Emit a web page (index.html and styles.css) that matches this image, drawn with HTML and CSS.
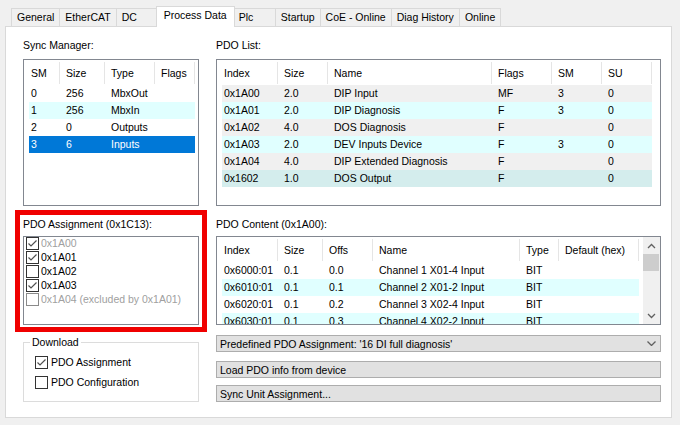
FILE: index.html
```html
<!DOCTYPE html>
<html>
<head>
<meta charset="utf-8">
<title>Process Data</title>
<link rel="stylesheet" href="styles.css">
</head>
<body>
<div class="tabs">
  <div class="tab">General</div>
  <div class="tab">EtherCAT</div>
  <div class="tab">DC</div>
  <div class="tab active">Process Data</div>
  <div class="tab">Plc</div>
  <div class="tab">Startup</div>
  <div class="tab">CoE - Online</div>
  <div class="tab">Diag History</div>
  <div class="tab last">Online</div>
</div>
<div class="panel">
  <div class="col">
    <div class="label">Sync Manager:</div>
    <div class="lv lv-top lv-sm">
      <div class="lv-head"><span class="c">SM</span><span class="c">Size</span><span class="c">Type</span><span class="c">Flags</span></div>
      <div class="lv-row"><span class="c">0</span><span class="c">256</span><span class="c">MbxOut</span><span class="c"></span></div>
      <div class="lv-row r-cyan"><span class="c">1</span><span class="c">256</span><span class="c">MbxIn</span><span class="c"></span></div>
      <div class="lv-row"><span class="c">2</span><span class="c">0</span><span class="c">Outputs</span><span class="c"></span></div>
      <div class="lv-row r-sel"><span class="c">3</span><span class="c">6</span><span class="c">Inputs</span><span class="c"></span></div>
    </div>
    <div class="group assign">
      <div class="label small-gap">PDO Assignment (0x1C13):</div>
      <div class="lv lv-assign">
        <div class="ai dim"><span class="cb"><svg viewBox="0 0 11 11"><polyline points="1.5,5.5 4,8 9.5,2.5"/></svg></span><span>0x1A00</span></div>
        <div class="ai"><span class="cb"><svg viewBox="0 0 11 11"><polyline points="1.5,5.5 4,8 9.5,2.5"/></svg></span><span>0x1A01</span></div>
        <div class="ai"><span class="cb"></span><span>0x1A02</span></div>
        <div class="ai"><span class="cb"><svg viewBox="0 0 11 11"><polyline points="1.5,5.5 4,8 9.5,2.5"/></svg></span><span>0x1A03</span></div>
        <div class="ai dim"><span class="cb cb-dim"></span><span>0x1A04 (excluded by 0x1A01)</span></div>
      </div>
    </div>
    <fieldset class="download">
      <legend>Download</legend>
      <div class="dl-item"><span class="cb"><svg viewBox="0 0 11 11"><polyline points="1.5,5.5 4,8 9.5,2.5"/></svg></span><span>PDO Assignment</span></div>
      <div class="dl-item"><span class="cb"></span><span>PDO Configuration</span></div>
    </fieldset>
  </div>
  <div class="col">
    <div class="label">PDO List:</div>
    <div class="lv lv-top lv-list">
      <div class="lv-head"><span class="c">Index</span><span class="c">Size</span><span class="c">Name</span><span class="c">Flags</span><span class="c">SM</span><span class="c">SU</span></div>
      <div class="lv-row r-gray"><span class="c">0x1A00</span><span class="c">2.0</span><span class="c">DIP Input</span><span class="c">MF</span><span class="c">3</span><span class="c">0</span></div>
      <div class="lv-row r-cyan"><span class="c">0x1A01</span><span class="c">2.0</span><span class="c">DIP Diagnosis</span><span class="c">F</span><span class="c">3</span><span class="c">0</span></div>
      <div class="lv-row r-gray"><span class="c">0x1A02</span><span class="c">4.0</span><span class="c">DOS Diagnosis</span><span class="c">F</span><span class="c"></span><span class="c">0</span></div>
      <div class="lv-row r-cyan"><span class="c">0x1A03</span><span class="c">2.0</span><span class="c">DEV Inputs Device</span><span class="c">F</span><span class="c">3</span><span class="c">0</span></div>
      <div class="lv-row r-gray"><span class="c">0x1A04</span><span class="c">4.0</span><span class="c">DIP Extended Diagnosis</span><span class="c">F</span><span class="c"></span><span class="c">0</span></div>
      <div class="lv-row r-act"><span class="c">0x1602</span><span class="c">1.0</span><span class="c">DOS Output</span><span class="c">F</span><span class="c"></span><span class="c">0</span></div>
    </div>
    <div class="group">
      <div class="label small-gap">PDO Content (0x1A00):</div>
      <div class="lv lv-content">
        <div class="lv-main">
          <div class="lv-head"><span class="c">Index</span><span class="c">Size</span><span class="c">Offs</span><span class="c">Name</span><span class="c">Type</span><span class="c">Default (hex)</span></div>
          <div class="lv-row"><span class="c">0x6000:01</span><span class="c">0.1</span><span class="c">0.0</span><span class="c">Channel 1 X01-4 Input</span><span class="c">BIT</span><span class="c"></span></div>
          <div class="lv-row r-cyan"><span class="c">0x6010:01</span><span class="c">0.1</span><span class="c">0.1</span><span class="c">Channel 2 X01-2 Input</span><span class="c">BIT</span><span class="c"></span></div>
          <div class="lv-row"><span class="c">0x6020:01</span><span class="c">0.1</span><span class="c">0.2</span><span class="c">Channel 3 X02-4 Input</span><span class="c">BIT</span><span class="c"></span></div>
          <div class="lv-row r-cyan"><span class="c">0x6030:01</span><span class="c">0.1</span><span class="c">0.3</span><span class="c">Channel 4 X02-2 Input</span><span class="c">BIT</span><span class="c"></span></div>
        </div>
        <div class="sbar">
          <div class="sb-btn"><svg width="9" height="6" viewBox="0 0 9 6"><polyline points="1,5 4.5,1.5 8,5"/></svg></div>
          <div class="sb-thumb"></div>
          <div class="sb-track"></div>
          <div class="sb-btn"><svg width="9" height="6" viewBox="0 0 9 6"><polyline points="1,1 4.5,4.5 8,1"/></svg></div>
        </div>
      </div>
    </div>
    <div class="combo"><span>Predefined PDO Assignment: '16 DI full diagnosis'</span><svg width="9" height="5" viewBox="0 0 9 5"><polyline points="0.5,0.5 4.5,4.5 8.5,0.5"/></svg></div>
    <div class="btn">Load PDO info from device</div>
    <div class="btn btn2">Sync Unit Assignment...</div>
  </div>
</div>
</body>
</html>
```

FILE: styles.css
```css
* { box-sizing: border-box; }
html, body { margin: 0; }
body {
  width: 680px;
  height: 425px;
  overflow: hidden;
  background: #f0f0f0;
  font-family: "Liberation Sans", Arial, sans-serif;
  font-size: 10.5px;
  color: #000;
}

/* tabs */
.tabs {
  display: flex;
  align-items: flex-end;
  height: 26px;
  padding-left: 11px;
}
.tab {
  height: 18px;
  line-height: 17px;
  padding: 0 5px;
  min-width: 42px;
  border-top: 1px solid #d9d9d9;
  border-left: 1px solid #d9d9d9;
  background: #f0f0f0;
  white-space: nowrap;
}
.tab.last { border-right: 1px solid #d9d9d9; }
.tab.active {
  position: relative;
  z-index: 1;
  height: 21px;
  margin: 0 -2px -1px;
  padding: 0 7px;
  background: #fff;
  border-right: 1px solid #d9d9d9;
}

/* panel */
.panel {
  width: 667px;
  height: 392px;
  margin-left: 5px;
  background: #fff;
  border: 1px solid #d9d9d9;
  display: grid;
  grid-template-columns: 176px 445px;
  column-gap: 17px;
  align-content: start;
  padding: 12px 0 0 17px;
}
.col { display: flex; flex-direction: column; }
.label {
  height: 13px;
  line-height: 13px;
  margin-bottom: 7px;
  white-space: nowrap;
}
.label.small-gap { margin-bottom: 5px; }
.group { margin-top: 12px; }

/* list views */
.lv {
  border: 1px solid #828790;
  background: #fff;
  overflow: hidden;
}
.lv-top { height: 147px; padding-left: 5px; }
.lv-head, .lv-row { display: grid; width: fit-content; }
.lv-head .c {
  margin: 2px 0 1px;
  line-height: 22px;
  border-right: 1px solid #e5e5e5;
}
.lv-row { height: 17px; line-height: 17px; }
.c {
  padding-left: 6px;
  white-space: nowrap;
  overflow: hidden;
}
.c:first-child { padding-left: 2px; }

.lv-sm .lv-head, .lv-sm .lv-row { grid-template-columns: 31px 45px 50px 40px; }
.lv-list .lv-head, .lv-list .lv-row { grid-template-columns: 56px 50px 164px 60px 50px 50px; }
.lv-main .lv-head, .lv-main .lv-row { grid-template-columns: 56px 45px 50px 147px 39px 80px; }

.r-cyan { background: #e0ffff; }
.r-gray { background: #f0f0f0; }
.r-act { background: #d4eded; }
.r-sel { background: #0078d7; color: #fff; }

/* PDO content with scrollbar */
.lv-content { height: 89px; display: flex; }
.lv-main { flex: 1; padding-left: 5px; overflow: hidden; }
.sbar {
  width: 17px;
  flex: none;
  background: #f0f0f0;
  display: flex;
  flex-direction: column;
}
.sb-btn {
  height: 17px;
  display: flex;
  align-items: center;
  justify-content: center;
}
.sb-btn svg polyline, .combo svg polyline {
  fill: none;
  stroke: #606060;
  stroke-width: 1.3;
}
.sb-thumb { height: 17px; background: #cdcdcd; margin: 0 1px 0 0; }
.sb-track { flex: 1; }

/* checkboxes */
.cb {
  width: 13px;
  height: 13px;
  flex: none;
  border: 1px solid #333;
  background: #fff;
  display: inline-flex;
}
.cb svg { width: 11px; height: 11px; }
.cb svg polyline { fill: none; stroke: #505050; stroke-width: 1.2; }
.cb-dim { border-color: #8a8a8a; }

/* PDO assignment */
.assign { position: relative; }
.assign::after {
  content: "";
  position: absolute;
  left: -8px;
  right: -8px;
  top: -8px;
  bottom: -7px;
  border: 5px solid #f00000;
  pointer-events: none;
}
.lv-assign { height: 89px; padding-left: 2px; }
.ai {
  display: flex;
  align-items: flex-start;
  gap: 2px;
  height: 14px;
  line-height: 13px;
  white-space: nowrap;
}
.ai.dim { color: #a0a0a0; }

/* download group */
.download {
  margin: 11px 0 0;
  padding: 3px 0 9px 6px;
  border: 1px solid #dcdcdc;
  min-inline-size: 0;
}
.download legend {
  padding: 0 2px;
  line-height: 13px;
}
.dl-item {
  display: flex;
  align-items: center;
  gap: 3px;
  height: 20px;
  padding-left: 5px;
}

/* buttons */
.combo, .btn {
  height: 17px;
  border: 1px solid #adadad;
  background: #e1e1e1;
  padding-left: 3px;
  line-height: 16px;
  white-space: nowrap;
}
.combo {
  margin-top: 10px;
  display: flex;
  align-items: center;
  justify-content: space-between;
  padding-right: 4px;
}
.btn { margin-top: 9px; }
.btn.btn2 { margin-top: 7px; }
```
